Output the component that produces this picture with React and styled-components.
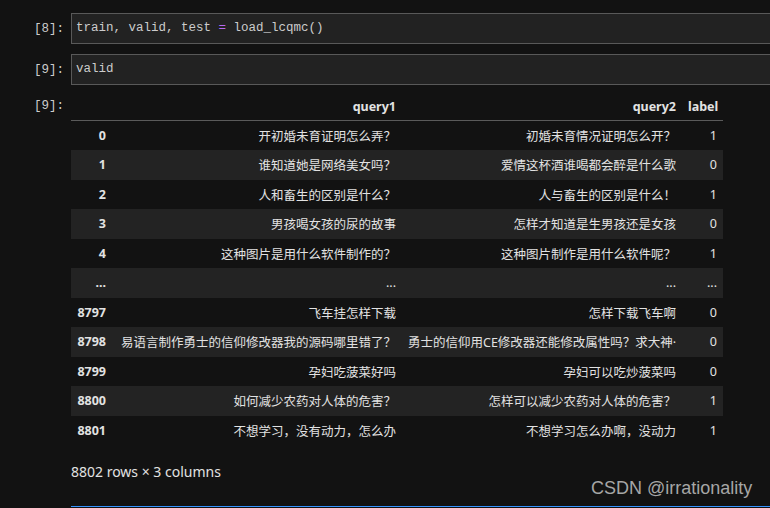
import React from "react";
import styled, { createGlobalStyle } from "styled-components";

const GlobalStyle = createGlobalStyle`
  html, body {
    margin: 0;
    padding: 0;
    background: #121212;
    overflow: hidden;
  }
  #root {
    width: 770px;
    height: 508px;
    position: relative;
    overflow: hidden;
  }
`;

// 노트북 데이터
const rows = [
  ["0", "开初婚未育证明怎么弄？", "初婚未育情况证明怎么开？", "1"],
  ["1", "谁知道她是网络美女吗？", "爱情这杯酒谁喝都会醉是什么歌", "0"],
  ["2", "人和畜生的区别是什么？", "人与畜生的区别是什么！", "1"],
  ["3", "男孩喝女孩的尿的故事", "怎样才知道是生男孩还是女孩", "0"],
  ["4", "这种图片是用什么软件制作的？", "这种图片制作是用什么软件呢？", "1"],
  ["...", "...", "...", "..."],
  ["8797", "飞车挂怎样下载", "怎样下载飞车啊", "0"],
  ["8798", "易语言制作勇士的信仰修改器我的源码哪里错了？", "勇士的信仰用CE修改器还能修改属性吗？求大神·", "0"],
  ["8799", "孕妇吃菠菜好吗", "孕妇可以吃炒菠菜吗", "0"],
  ["8800", "如何减少农药对人体的危害？", "怎样可以减少农药对人体的危害？", "1"],
  ["8801", "不想学习，没有动力，怎么办", "不想学习怎么办啊，没动力", "1"],
];

const App = () => {
  return (
    <>
      <GlobalStyle />
      <Notebook>
        <Cell>
          <Prompt>[8]:</Prompt>
          <CodeBox>
            train, valid, test <Op>=</Op> load_lcqmc()
          </CodeBox>
        </Cell>
        <Cell>
          <Prompt>[9]:</Prompt>
          <CodeBox>valid</CodeBox>
        </Cell>
        <OutputCell>
          <Prompt>[9]:</Prompt>
          <Output>
            <Table>
              <colgroup>
                <col style={{ width: 41 }} />
                <col style={{ width: 290 }} />
                <col style={{ width: 280 }} />
                <col style={{ width: 41 }} />
              </colgroup>
              <thead>
                <tr>
                  <HeadCell />
                  <HeadCell>query1</HeadCell>
                  <HeadCell>query2</HeadCell>
                  <HeadCell>label</HeadCell>
                </tr>
              </thead>
              <tbody>
                {rows.map(row => (
                  <Row key={row[0] + row[1]}>
                    <IndexCell>{row[0]}</IndexCell>
                    <DataCell>{row[1]}</DataCell>
                    <DataCell>{row[2]}</DataCell>
                    <DataCell>{row[3]}</DataCell>
                  </Row>
                ))}
              </tbody>
            </Table>
            <Summary>8802 rows × 3 columns</Summary>
          </Output>
        </OutputCell>
        <NextCell>
          <span />
          <FocusedBox />
        </NextCell>
      </Notebook>
      <Watermark>CSDN @irrationality</Watermark>
    </>
  );
};

const Notebook = styled.main`
  padding-top: 13px;
  display: flex;
  flex-direction: column;
  gap: 10px;
`;

const Cell = styled.section`
  display: grid;
  grid-template-columns: 71px 720px;
  align-items: center;
`;

const Prompt = styled.div`
  padding-right: 7px;
  text-align: right;
  font-family: "Liberation Mono", monospace;
  font-size: 12.5px;
  color: #cccccc;
`;

const CodeBox = styled.div`
  height: 29px;
  line-height: 29px;
  padding-left: 4px;
  background: #222222;
  border: 1px solid #595959;
  font-family: "Liberation Mono", monospace;
  font-size: 12.5px;
  color: #cccccc;
  white-space: pre;
`;

const Op = styled.span`
  color: #b568f0;
`;

const OutputCell = styled.section`
  display: grid;
  grid-template-columns: 71px 720px;
  align-items: start;
  margin-top: -3px;

  & > ${Prompt} {
    line-height: 28px;
  }
`;

const Output = styled.div`
  display: flex;
  flex-direction: column;
`;

const Table = styled.table`
  width: 652px;
  table-layout: fixed;
  border-collapse: collapse;
  font-family: "Noto Sans", "Noto Sans CJK SC", sans-serif;
  font-size: 12.5px;
  color: #e2e2e2;
`;

const HeadCell = styled.th`
  height: 28px;
  padding: 0 6px;
  text-align: right;
  font-weight: 700;
  border-bottom: 1px solid #5a5a5a;
  white-space: nowrap;
`;

const Row = styled.tr`
  height: 29.5px;
  &:nth-child(even) {
    background: #232323;
  }
`;

const IndexCell = styled.th`
  padding: 0 6px;
  text-align: right;
  font-weight: 700;
  white-space: nowrap;
`;

const DataCell = styled.td`
  padding: 0 6px;
  text-align: right;
  white-space: nowrap;
  overflow: hidden;
`;

const Summary = styled.div`
  margin-top: 17px;
  font-family: "Noto Sans", sans-serif;
  font-size: 14px;
  color: #e2e2e2;
`;

const NextCell = styled.section`
  display: grid;
  grid-template-columns: 71px 720px;
  margin-top: 15px;
`;

const FocusedBox = styled.div`
  height: 20px;
  border-top: 1px solid #3794ff;
`;

const Watermark = styled.div`
  position: absolute;
  left: 591px;
  top: 478px;
  font-family: "Liberation Sans", Arial, sans-serif;
  font-size: 18px;
  color: #a6a6a6;
`;

export default App;
